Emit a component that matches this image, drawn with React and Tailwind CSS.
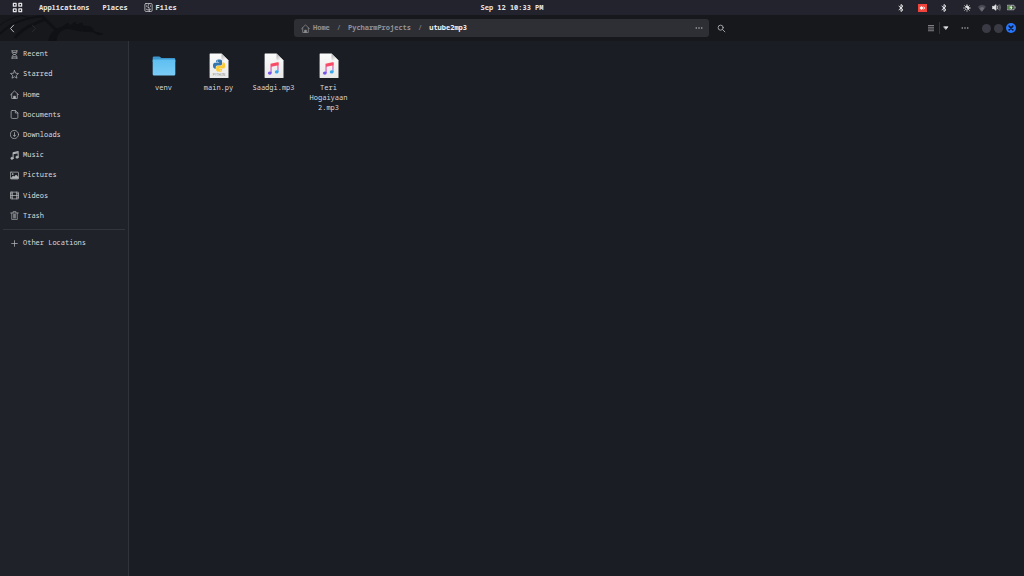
import React from 'react';

const line = {
  fill: 'none',
  stroke: 'currentColor',
  strokeLinecap: 'round',
  strokeLinejoin: 'round',
};

function Icon({ className = 'h-2 w-2', children, ...rest }) {
  return (
    <svg viewBox="0 0 16 16" className={`shrink-0 ${className}`} aria-hidden="true" {...line} strokeWidth="1.4" {...rest}>
      {children}
    </svg>
  );
}

const HomeShape = () => (
  <>
    <path d="M1 8.5 8 1.5l7 7M3 7v8h10V7" />
    <path d="M6.5 15v-4h3v4z" fill="currentColor" />
  </>
);

const places = [
  { name: 'Recent', icon: <path d="M3 1.500h10M3 14.500h10M4 1.500V5l2.500 3L4 11v3.500M12 1.500V5L9.500 8l2.500 3v3.500M5.500 4.500h5M5.500 12h5M7 8h2" /> },
  { name: 'Starred', icon: <path d="m8 1 2.100 4.700 5 .5-3.800 3.400 1.100 5L8 12l-4.400 2.600 1.100-5L.9 6.200l5-.5z" /> },
  { name: 'Home', icon: <HomeShape /> },
  { name: 'Documents', icon: <path d="M4 .8h5.500L14 5.300V13a2 2 0 0 1-2 2H4a2 2 0 0 1-2-2V2.800a2 2 0 0 1 2-2zM9.500 1v4.300H14" /> },
  { name: 'Downloads', icon: <><circle cx="8" cy="8" r="7.200" /><path d="M8 4.500v6.500M6 9.200l2 2 2-2" /></> },
  {
    name: 'Music',
    icon: (
      <>
        <path d="M5.500 13V3l9-2v10M5.500 5l9-2" strokeWidth="1.8" />
        <circle cx="3.500" cy="13" r="2" fill="currentColor" />
        <circle cx="12.500" cy="11" r="2" fill="currentColor" />
      </>
    ),
  },
  {
    name: 'Pictures',
    icon: (
      <>
        <rect x=".8" y="2" width="14.400" height="12" rx="1" />
        <path d="m2 13 3.500-4 2 1.500L11 7l3.500 4v2z" fill="currentColor" />
        <circle cx="4.500" cy="5.500" r=".8" fill="currentColor" />
      </>
    ),
  },
  { name: 'Videos', icon: <><rect x=".8" y="2" width="14.400" height="12" rx="1" /><path d="M4 2v12M12 2v12M4 8h8M1 5h3M1 8h3M1 11h3M12 5h3M12 8h3M12 11h3" /></> },
  { name: 'Trash', icon: <path d="M1 3.500h14M5.500 3.500V1h5v2.500M3 3.500V15h10V3.500M6 6v6.500M8 6v6.500M10 6v6.500" strokeWidth="1.100" /> },
];

function Page({ id, children }) {
  return (
    <svg viewBox="0 0 20 26" className="h-[26px] w-5" aria-hidden="true">
      <defs>
        <linearGradient id={`${id}-paper`} x2="0" y2="1">
          <stop stopColor="#fbfbfb" />
          <stop offset="1" stopColor="#e8e8e8" />
        </linearGradient>
        <linearGradient id={`${id}-fold`} x2="1" y2="1">
          <stop offset=".2" stopColor="#bdbdbd" />
          <stop offset=".7" stopColor="#f6f6f6" />
        </linearGradient>
      </defs>
      <path d="M.6 1q0-.5.5-.5h11.400l7 7v17q0 .5-.5.5H1.100q-.5 0-.5-.5z" fill={`url(#${id}-paper)`} />
      <path d="M12.500.5V6q0 1.500 1.500 1.500h5.500z" fill={`url(#${id}-fold)`} />
      {children}
    </svg>
  );
}

function FolderIcon() {
  return (
    <svg viewBox="0 0 24 26" className="h-[26px] w-6" aria-hidden="true">
      <defs>
        <linearGradient id="folder-front" x2="0" y2="1">
          <stop stopColor="#5fbff0" />
          <stop offset="1" stopColor="#7accf6" />
        </linearGradient>
      </defs>
      <path d="M.7 4.800q0-1.300 1.300-1.300h5q.8 0 1.500.7l.9.700h12.600q1.300 0 1.300 1.300V9H.7z" fill="#3d97cf" />
      <path d="M.7 7.200q0-.7.700-.7h21.200q.7 0 .7.700v14q0 1.300-1.300 1.300H2q-1.300 0-1.300-1.300z" fill="url(#folder-front)" />
    </svg>
  );
}

function PythonIcon() {
  const half = 'M11.914 0C5.820 0 6.200 2.656 6.200 2.656l.007 2.752h5.814v.826H3.900S0 5.789 0 11.969c0 6.180 3.403 5.960 3.403 5.960h2.030v-2.867s-.109-3.420 3.350-3.420h5.766s3.240.052 3.240-3.148V3.202S18.280 0 11.914 0zM8.708 1.850a1.046 1.046 0 1 1 0 2.092 1.046 1.046 0 0 1 0-2.092z';
  return (
    <Page id="py">
      <g transform="translate(4 6.500) scale(.51)">
        <path d={half} fill="#3476ad" />
        <path d={half} fill="#fccc38" transform="rotate(180 12 12)" />
      </g>
      <text x="10" y="23.200" textAnchor="middle" fontSize="3" fill="#8a8a8a" fontFamily="Liberation Sans, sans-serif">PYTHON</text>
    </Page>
  );
}

function AudioIcon({ id }) {
  return (
    <Page id={id}>
      <defs>
        <linearGradient id={`${id}-note`} gradientUnits="userSpaceOnUse" x1="0" y1="9" x2="0" y2="22">
          <stop offset=".2" stopColor="#fb4a63" />
          <stop offset=".55" stopColor="#d552b4" />
          <stop offset=".95" stopColor="#6a58f0" />
        </linearGradient>
        <linearGradient id={`${id}-side`} gradientUnits="userSpaceOnUse" x1="0" y1="9" x2="0" y2="21">
          <stop offset=".2" stopColor="#fb4a63" />
          <stop offset=".6" stopColor="#a765dd" />
          <stop offset=".85" stopColor="#37a5ee" />
        </linearGradient>
      </defs>
      <path d="M6.500 10.800 14.500 9v3.200l-6.900 1.600V20H6.500z" fill={`url(#${id}-note)`} />
      <path d="M13.400 10h1.100v9h-1.100z" fill={`url(#${id}-side)`} />
      <ellipse cx="5.800" cy="20.100" rx="1.900" ry="1.600" fill="#7554ea" />
      <ellipse cx="12.700" cy="18.900" rx="1.900" ry="1.600" fill="#37a5ee" />
    </Page>
  );
}

const files = [
  { name: 'venv', icon: <FolderIcon /> },
  { name: 'main.py', icon: <PythonIcon /> },
  { name: 'Saadgi.mp3', icon: <AudioIcon id="saadgi" /> },
  { name: 'Teri Hogaiyaan 2.mp3', icon: <AudioIcon id="teri" /> },
];

function Bluetooth() {
  return (
    <Icon className="h-2 w-2" strokeWidth="2">
      <path d="m4 4.500 8 7L8 15V1l4 3.500-8 7" />
    </Icon>
  );
}

function TopBar() {
  return (
    <header className="grid h-[15px] grid-cols-[1fr_auto_1fr] items-center bg-[#23232d] font-bold text-[#e6e6e8]">
      <nav className="flex items-center pl-3" aria-label="Desktop">
        <button type="button" aria-label="Show applications" className="mr-4">
          <Icon className="h-[11px] w-[11px]" strokeWidth="1.800">
            <rect x="2" y="2" width="4" height="4" />
            <rect x="10" y="2" width="4" height="4" />
            <rect x="2" y="10" width="4" height="4" />
            <rect x="10" y="10" width="4" height="4" />
          </Icon>
        </button>
        <button type="button" className="mr-[13px]">Applications</button>
        <button type="button" className="mr-4">Places</button>
        <button type="button" className="flex items-center gap-[3px]">
          <Icon className="h-[9px] w-[9px]" strokeWidth="1.200">
            <rect x="1.500" y="1" width="13" height="14" rx="2" />
            <path d="M9 1c-1.500 3-2 5-2 7h2c0 3 0 5 .5 7M4.500 5v1M11.500 5v1M4 11c2.500 1.800 5.500 1.800 8 0" />
          </Icon>
          Files
        </button>
      </nav>
      <time>Sep 12 10:33 PM</time>
      <div className="flex items-center justify-end pr-2">
        <Bluetooth />
        <svg viewBox="0 0 18 16" className="mr-[13px] ml-[13px] h-2 w-[9px]" aria-hidden="true">
          <rect width="18" height="16" fill="#ef443b" />
          <path d="m7 4 4 4-4 4-4-4zM10 4l4.500 4-4.500 4 2-4z" fill="#fff" />
        </svg>
        <Bluetooth />
        <Icon className="mr-[7px] ml-[15px] h-2 w-2">
          <circle cx="8" cy="8" r="4" />
          <path d="M8 4a4 4 0 0 1 4 4 4 4 0 0 1-1.200 2.800L5.200 5.200A4 4 0 0 1 8 4z" fill="currentColor" />
          <path d="M8 1v1M8 14v1M1 8h1M14 8h1M3 3l.7.700M12.300 12.300l.7.700M13 3l-.7.700M3 13l.7-.7" strokeWidth="1.800" opacity=".7" />
        </Icon>
        <Icon className="mr-[6px] h-2 w-2 text-[#6d6d75]">
          <path d="M1 5.500c4-4 10-4 14 0L8 14z" fill="currentColor" opacity=".55" />
          <path d="M4 8.500c2.500-2 5.500-2 8 0L8 14z" fill="currentColor" />
        </Icon>
        <Icon className="mr-[6px] h-[9px] w-[9px]">
          <path d="M1 6h2.500L7 3v10L3.500 10H1z" fill="currentColor" />
          <path d="M9.500 5.500q1.500 2.500 0 5" />
          <path d="M12 4q2.500 4 0 8M14 3q2.500 5 0 10" opacity=".45" />
        </Icon>
        <Icon className="h-[9px] w-[9px]">
          <path d="M1 4h11.500v8H1zM14.500 7v2" opacity=".8" />
          <path d="M3 6h6v4H3z" fill="#65a94f" stroke="#65a94f" />
          <path d="m8 5-2 3h3l-2 3" stroke="#fff" />
        </Icon>
      </div>
    </header>
  );
}

function Dragon() {
  return (
    <svg viewBox="0 0 110 26" className="pointer-events-none absolute top-0 left-0 h-[26px] w-[110px]" aria-hidden="true" fill="none" stroke="#101114">
      <path d="M0 19C10 8 24 3 43 1" strokeWidth="2" />
      <path d="M15 23C22 13 34 9 46 4" strokeWidth="3" />
      <path d="M0 10C8 4 15 2 23 0M20 0q12 5 24 1" strokeWidth="1" />
      <path d="M42 1l14 14" strokeWidth="3" />
      <path d="M49 26c1-9 7-14 17-14 8 0 12 3 17 3 7 0 12 2 20 4l-5 1-4-3-11-1-10-3c-11 0-16 4-17 13z" fill="#101114" strokeWidth="1" />
      <path d="M62 12l6-4 2 3 5-4 1 3 6-2 1 3 8 1 3 3-14 1z" fill="#101114" strokeWidth="1" />
    </svg>
  );
}

function Dots() {
  return (
    <Icon stroke="none" fill="currentColor">
      <circle cx="2.500" cy="8" r="1.500" />
      <circle cx="8" cy="8" r="1.500" />
      <circle cx="13.500" cy="8" r="1.500" />
    </Icon>
  );
}

function HeaderBar() {
  return (
    <div className="relative flex h-[26px] items-center bg-[#17181c] text-[#b9b9bc]">
      <Dragon />
      <div className="relative flex w-[294px] shrink-0 items-center gap-3 pl-2">
        <button type="button" aria-label="Back" className="text-[#c4c4c6]">
          <Icon className="h-[9px] w-[9px]" strokeWidth="1.700"><path d="M10 2 4.500 8l5.500 6" /></Icon>
        </button>
        <button type="button" aria-label="Forward" disabled className="text-[#2b2c30]">
          <Icon className="h-[9px] w-[9px]" strokeWidth="1.700"><path d="m6 2 5.500 6L6 14" /></Icon>
        </button>
      </div>
      <nav aria-label="Path" className="flex h-[18px] min-w-0 flex-1 items-center rounded-[3px] bg-[#2e2f34] pr-[6px] pl-[7px] font-bold text-[#929296]">
        <a href="#home" className="flex items-center gap-[3px]">
          <Icon className="h-[9px] w-[9px]" strokeWidth="1.300"><HomeShape /></Icon>
          Home
        </a>
        <span className="mx-[7px] font-normal">/</span>
        <a href="#projects">PycharmProjects</a>
        <span className="mx-[7px] font-normal">/</span>
        <a href="#utube2mp3" aria-current="page" className="text-[#f2f2f3]">utube2mp3</a>
        <button type="button" aria-label="Path menu" className="ml-auto text-[#b9b9bc]"><Dots /></button>
      </nav>
      <div className="flex w-[315px] shrink-0 items-center pr-2 pl-2">
        <button type="button" aria-label="Search" className="text-[#a6a6a9]">
          <Icon className="h-[9px] w-[9px]" strokeWidth="1.700"><circle cx="6.500" cy="6.500" r="4.500" /><path d="m10 10 4 4" /></Icon>
        </button>
        <button type="button" aria-label="List view" className="ml-auto text-[#9c9c9f]">
          <Icon strokeLinecap="butt" strokeWidth="1.600"><path d="M2 3h12M2 6.500h12M2 10h12M2 13.500h12" /></Icon>
        </button>
        <span className="mr-[2px] ml-1 h-3 w-px bg-[#36373b]" />
        <button type="button" aria-label="View options" className="text-[#e6e6e8]">
          <Icon><path d="M4 5.500h8L8 10.500z" fill="currentColor" /></Icon>
        </button>
        <button type="button" aria-label="Menu" className="mr-[13px] ml-[11px]"><Dots /></button>
        <div className="flex items-center gap-[3px]">
          <button type="button" aria-label="Minimize" className="h-[9px] w-[9px] rounded-full bg-[#3a3a45]" />
          <button type="button" aria-label="Maximize" className="h-[9px] w-[9px] rounded-full bg-[#3a3a45]" />
          <button type="button" aria-label="Close" className="flex h-[10px] w-[10px] items-center justify-center rounded-full bg-[#2777ff] text-[#0d1a33]">
            <Icon className="h-[6px] w-[6px]" strokeWidth="4"><path d="m3 3 10 10M13 3 3 13" /></Icon>
          </button>
        </div>
      </div>
    </div>
  );
}

export default function App() {
  return (
    <div className="flex min-h-screen flex-col bg-[#1a1d24] font-['Noto_Sans_Mono','DejaVu_Sans_Mono',monospace] text-[7px] leading-[10px] text-[#d9dadc]">
      <TopBar />
      <HeaderBar />
      <div className="flex flex-1">
        <aside className="w-[129px] shrink-0 border-r border-[#30333a] bg-[#1f2229] pt-[3px]">
          <nav aria-label="Places">
            <ul className="grid h-[182px] grid-rows-9">
              {places.map((place) => (
                <li key={place.name} className="flex">
                  <a href={`#${place.name.toLowerCase()}`} className="flex flex-1 items-center gap-1 pl-[10px]">
                    <Icon className="h-[9px] w-[9px] text-[#b4b6b9]" strokeWidth="1.300">{place.icon}</Icon>
                    {place.name}
                  </a>
                </li>
              ))}
            </ul>
            <hr className="mx-[3px] my-[3px] border-[#32353c]" />
            <a href="#other" className="flex h-5 items-center gap-1 pl-[10px]">
              <Icon className="h-[9px] w-[9px] text-[#b4b6b9]" strokeWidth="1.300"><path d="M8 3v10M3 8h10" /></Icon>
              Other Locations
            </a>
          </nav>
        </aside>
        <main className="min-w-0 flex-1 pt-3 pl-[7px]">
          <ul className="flex flex-wrap">
            {files.map((file) => (
              <li key={file.name} className="w-[55px]">
                <button type="button" className="flex w-full flex-col items-center gap-1 px-1 text-center">
                  {file.icon}
                  <span>{file.name}</span>
                </button>
              </li>
            ))}
          </ul>
        </main>
      </div>
    </div>
  );
}
